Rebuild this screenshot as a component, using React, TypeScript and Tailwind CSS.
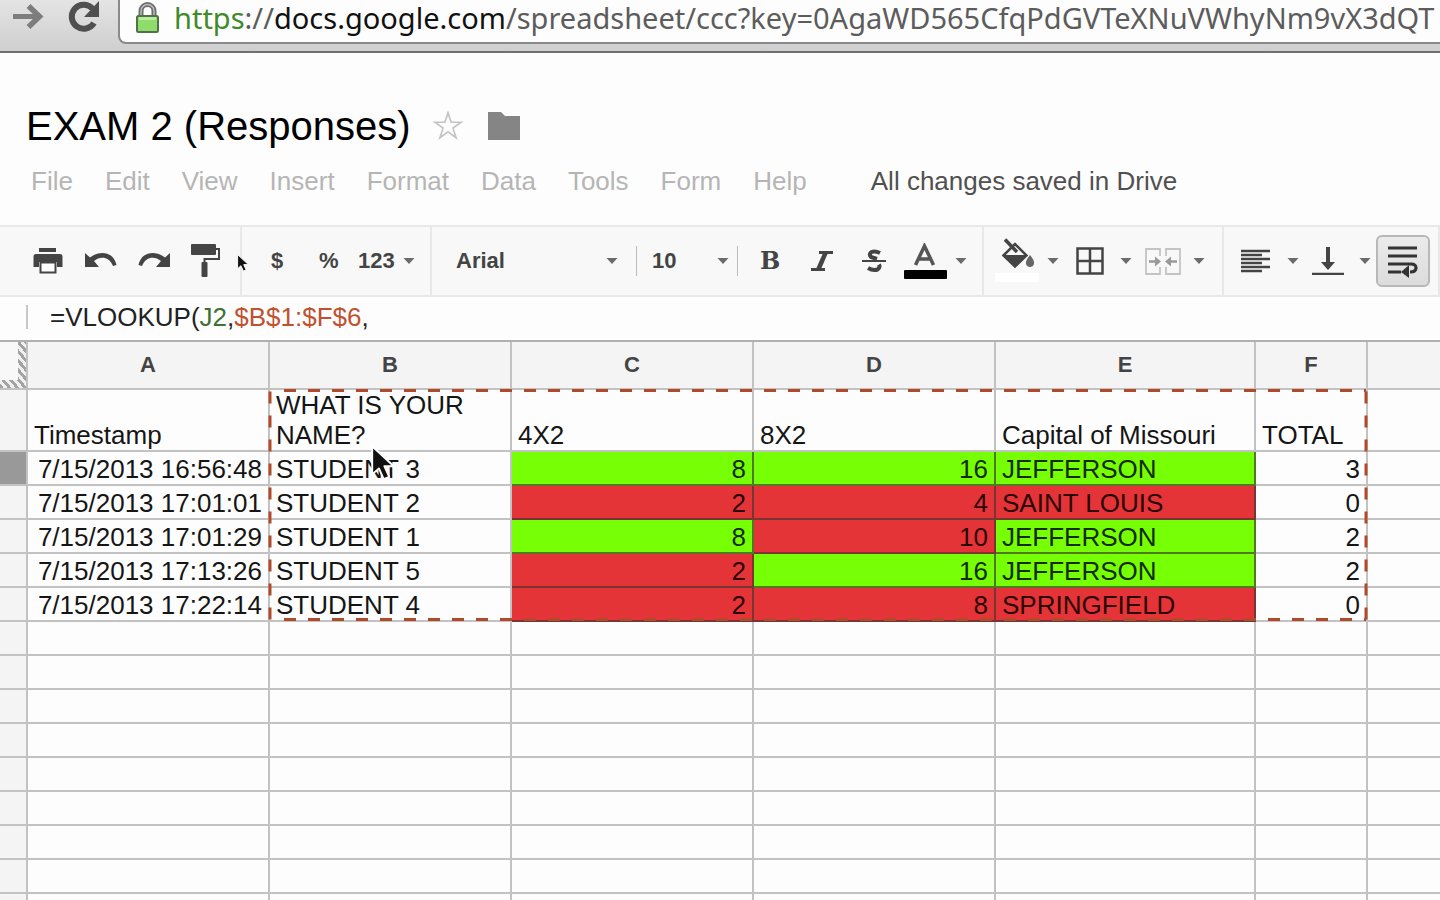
import type { ReactNode } from 'react';

type Mark = 'ok' | 'bad';

interface ResponseRow {
  time: string;
  name: string;
  c: [string, Mark];
  d: [string, Mark];
  e: [string, Mark];
  total: string;
}

const MENUS = ['File', 'Edit', 'View', 'Insert', 'Format', 'Data', 'Tools', 'Form', 'Help'];

const COLUMNS = ['A', 'B', 'C', 'D', 'E', 'F'];

const QUESTIONS = ['Timestamp', 'WHAT IS YOUR NAME?', '4X2', '8X2', 'Capital of Missouri', 'TOTAL'];

const ROWS: ResponseRow[] = [
  { time: '7/15/2013 16:56:48', name: 'STUDENT 3', c: ['8', 'ok'], d: ['16', 'ok'], e: ['JEFFERSON', 'ok'], total: '3' },
  { time: '7/15/2013 17:01:01', name: 'STUDENT 2', c: ['2', 'bad'], d: ['4', 'bad'], e: ['SAINT LOUIS', 'bad'], total: '0' },
  { time: '7/15/2013 17:01:29', name: 'STUDENT 1', c: ['8', 'ok'], d: ['10', 'bad'], e: ['JEFFERSON', 'ok'], total: '2' },
  { time: '7/15/2013 17:13:26', name: 'STUDENT 5', c: ['2', 'bad'], d: ['16', 'ok'], e: ['JEFFERSON', 'ok'], total: '2' },
  { time: '7/15/2013 17:22:14', name: 'STUDENT 4', c: ['2', 'bad'], d: ['8', 'bad'], e: ['SPRINGFIELD', 'bad'], total: '0' },
];

const EMPTY_ROWS = 9;

const markClass: Record<Mark, string> = {
  ok: 'bg-[#76ff05] border-[#4f7a22] text-[#142b00]',
  bad: 'bg-[#e53437] border-[#7a3532] text-[#2b0506]',
};

function Caret() {
  return (
    <svg className="h-2 w-3 shrink-0" viewBox="0 0 12 8" fill="#6b6b6b">
      <path d="M0.5 1h11L6 7z" />
    </svg>
  );
}

function ToolButton({ label, className, children }: { label: string; className: string; children: ReactNode }) {
  return (
    <button type="button" aria-label={label} className={`flex h-12 shrink-0 items-center ${className}`}>
      {children}
    </button>
  );
}

function Cursor({ className }: { className: string }) {
  return (
    <svg className={`pointer-events-none absolute ${className}`} viewBox="0 0 20 30">
      <path d="M1 1v23.5l5.6-5 4 9 4.6-2-4-8.8H19z" fill="#111" stroke="#fff" strokeWidth="1.6" strokeLinejoin="round" />
    </svg>
  );
}

function BrowserBar() {
  return (
    <div className="flex h-[53px] items-start border-b-2 border-[#707070] bg-linear-to-b from-[#e4e4e4] to-[#cfcfcf]">
      <button type="button" aria-label="Forward" className="ml-3 mt-0.5 shrink-0">
        <svg className="h-7 w-8" viewBox="0 0 32 28" fill="none" stroke="#7d7d7d" strokeWidth="5">
          <path d="M1 14.5h26" />
          <path d="M16.5 4l11 10.5-11 10.5" strokeWidth="5.5" />
        </svg>
      </button>
      <button type="button" aria-label="Reload" className="ml-[22px] shrink-0">
        <svg className="h-9 w-9" viewBox="0 0 36 36">
          <path d="M26.5 8.5A12 12 0 1 0 28 23" fill="none" stroke="#505050" strokeWidth="6" />
          <path d="M33 1v16H18z" fill="#505050" />
        </svg>
      </button>
      <div className="ml-4 flex h-11 min-w-0 flex-1 items-start rounded-bl-lg border-b-2 border-l-2 border-[#8a8a8a] bg-[#fdfdfd]">
        <svg className="ml-3.5 h-[34px] w-7 shrink-0" viewBox="0 0 28 34">
          <path d="M7 17v-6a6.500 6.500 0 0 1 13 0v6" fill="none" stroke="#6d6d6d" strokeWidth="5" />
          <path d="M7 17v-6a6.500 6.500 0 0 1 13 0v6" fill="none" stroke="#b9b9b9" strokeWidth="1.500" />
          <rect x="3" y="16" width="21" height="16" rx="1.500" fill="#8fdc6c" stroke="#52704a" strokeWidth="2" />
          <path d="M5 18.500h17" stroke="#b5ee9a" strokeWidth="3" />
        </svg>
        <div className="ml-3 whitespace-nowrap font-['Noto_Sans',sans-serif] text-[29px] leading-9 text-[#5c5c5c]">
          <span className="text-[#3f8a2b]">https</span>://<span className="text-[#111]">docs.google.com</span>
          /spreadsheet/ccc?key=0AgaWD565CfqPdGVTeXNuVWhyNm9vX3dQT
        </div>
      </div>
    </div>
  );
}

function DocHeader() {
  return (
    <header className="h-[172px] pt-[49px]">
      <div className="flex items-center">
        <h1 className="ml-[26px] whitespace-nowrap text-[40px] leading-[48px] text-black">EXAM 2 (Responses)</h1>
        <button type="button" aria-label="Star" className="ml-[22px]">
          <svg className="h-[30px] w-[30px]" viewBox="0 0 32 32" fill="none" stroke="#c4c4c4" strokeWidth="1.800">
            <path d="M16 2l3.300 10H30l-8.700 6.300 3.300 10.200L16 22.200l-8.600 6.300 3.300-10.200L2 12h10.700z" />
          </svg>
        </button>
        <button type="button" aria-label="Move to folder" className="ml-[25px]">
          <svg className="h-7 w-8" viewBox="0 0 32 28" fill="#858585">
            <path d="M0 0h13l4 4h15v24H0z" />
          </svg>
        </button>
      </div>
      <nav className="ml-[31px] mt-[15px] flex items-center whitespace-nowrap text-[26px] leading-8">
        <div className="flex gap-8 text-[#b5b5b5]">
          {MENUS.map((menu) => (
            <button key={menu} type="button">
              {menu}
            </button>
          ))}
        </div>
        <span className="ml-16 text-[#505050]">All changes saved in Drive</span>
      </nav>
    </header>
  );
}

function Toolbar() {
  return (
    <div className="flex h-[72px] items-stretch overflow-hidden border-y-2 border-[#e8e8e8] bg-[#f8f8f8] text-[22px] font-bold leading-7 text-[#444]">
      <div className="flex w-[242px] shrink-0 items-center border-r-2 border-[#e8e8e8] pl-[33px]">
        <ToolButton label="Print" className="w-[52px]">
          <svg className="h-[26px] w-[30px]" viewBox="0 0 30 26" fill="#444">
            <path d="M6 0h17v4H6z" />
            <path d="M3 6h24q2.500 0 2.500 2.500V19H24v-5H6v5H.5V8.500Q.5 6 3 6z" />
            <path d="M7.500 14.500h15v10h-15z" fill="#fff" stroke="#444" strokeWidth="2" />
          </svg>
        </ToolButton>
        <ToolButton label="Undo" className="w-[53px]">
          <svg className="h-5 w-8" viewBox="0 0 32 20" fill="#444">
            <path d="M0 2l5 4.500C13 0 28-1 31.500 14l-3.500 1C24 5 15 5 9 10l5 6H0z" />
          </svg>
        </ToolButton>
        <ToolButton label="Redo" className="w-[53px]">
          <svg className="h-5 w-8" viewBox="0 0 32 20" fill="#444">
            <path d="M32 2l-5 4.500C19 0 4-1 .5 14l3.500 1C8 5 17 5 23 10l-5 6h14z" />
          </svg>
        </ToolButton>
        <ToolButton label="Paint format" className="w-8">
          <svg className="h-[34px] w-[30px]" viewBox="0 0 30 34" fill="#444">
            <rect width="25" height="11" rx="1" />
            <path d="M25 5h3v10H13.500v5" fill="none" stroke="#444" strokeWidth="2" />
            <rect x="10.500" y="18" width="6" height="15" rx="1" />
          </svg>
        </ToolButton>
      </div>
      <div className="flex w-[190px] shrink-0 items-center border-r-2 border-[#e8e8e8] pl-[29px]">
        <ToolButton label="Format as currency" className="w-12">
          $
        </ToolButton>
        <ToolButton label="Format as percent" className="w-[39px]">
          %
        </ToolButton>
        <ToolButton label="More formats" className="gap-2">
          123
          <Caret />
        </ToolButton>
      </div>
      <div className="flex w-[552px] shrink-0 items-center border-r-2 border-[#e8e8e8] pl-6">
        <ToolButton label="Font" className="w-[162px] justify-between">
          Arial
          <Caret />
        </ToolButton>
        <div className="ml-[18px] h-[30px] w-px bg-[#bbb]" />
        <ToolButton label="Font size" className="ml-[15px] w-[77px] justify-between">
          10
          <Caret />
        </ToolButton>
        <div className="ml-2 h-[30px] w-px bg-[#bbb]" />
        <ToolButton label="Bold" className="ml-[22px] w-[51px]">
          <span className="font-['DejaVu_Serif',serif] text-2xl">B</span>
        </ToolButton>
        <ToolButton label="Italic" className="w-[51px]">
          <svg className="h-5 w-[22px]" viewBox="0 0 22 20" fill="none" stroke="#444">
            <path d="M8 1.500h14M0 18.500h14" strokeWidth="3" />
            <path d="M14.500 2L7.500 18" strokeWidth="4.500" />
          </svg>
        </ToolButton>
        <ToolButton label="Strikethrough" className="w-[42px]">
          <svg className="h-6 w-6" viewBox="0 0 24 24" fill="none" stroke="#444">
            <path d="M18 4Q13 1.500 9.500 3 6.500 5 9 8l6 2M6 19q5 3 9.500 1.500 3-2 1.500-5" strokeWidth="4" />
            <path d="M0 12h24" strokeWidth="2" />
          </svg>
        </ToolButton>
        <ToolButton label="Text colour" className="gap-2">
          <svg className="h-9 w-[43px]" viewBox="0 0 43 36">
            <path d="M11.500 22L20.500 3l9 19M14.500 16h12" fill="none" stroke="#555" strokeWidth="3.500" />
            <rect y="27" width="43" height="9" rx="1" fill="#000" />
          </svg>
          <Caret />
        </ToolButton>
      </div>
      <div className="flex w-[240px] shrink-0 items-center border-r-2 border-[#e8e8e8] pl-[11px]">
        <ToolButton label="Fill colour" className="w-[81px] gap-2">
          <svg className="h-[46px] w-11" viewBox="0 0 44 46">
            <rect y="35" width="44" height="9" fill="#fff" />
            <path d="M8.500 17.500L20 6l11.500 11.500L20 28.500z" fill="#f8f8f8" stroke="#444" strokeWidth="2.500" />
            <path d="M8 17h24L20 29z" fill="#444" />
            <path d="M10 1.500L22 14" stroke="#444" strokeWidth="3.500" />
            <path d="M35 17q5 6 4 9-1 3-4 3t-4-3q-1-3 4-9z" fill="#666" />
          </svg>
          <Caret />
        </ToolButton>
        <ToolButton label="Borders" className="w-[69px] gap-4">
          <svg className="h-7 w-7" viewBox="0 0 28 28" fill="none" stroke="#444" strokeWidth="2.500">
            <path d="M1.500 1.500h25v25h-25zM14 1.500v25M1.500 14h25" />
          </svg>
          <Caret />
        </ToolButton>
        <ToolButton label="Merge cells" className="gap-3">
          <svg className="h-[27px] w-9" viewBox="0 0 36 27" fill="none" stroke="#c4c4c4" strokeWidth="1.800">
            <path d="M15 8V1H1v25h14v-7M21 8V1h14v25H21v-7" />
            <path d="M4 13.500h6M32 13.500h-6" stroke="#999" strokeWidth="2.500" />
            <path d="M10 8.500l6 5-6 5zM26 8.500l-6 5 6 5z" fill="#999" stroke="none" />
          </svg>
          <Caret />
        </ToolButton>
      </div>
      <div className="flex w-[216px] shrink-0 items-center border-r-2 border-[#e8e8e8] pl-[17px]">
        <ToolButton label="Horizontal align" className="w-[71px] gap-[17px]">
          <svg className="h-6 w-[29px]" viewBox="0 0 29 24" stroke="#444" strokeWidth="2.400">
            <path d="M0 2h29M0 6h21M0 10h29M0 14h21M0 18h29M0 22h21" />
          </svg>
          <Caret />
        </ToolButton>
        <ToolButton label="Vertical align" className="w-16 gap-[15px]">
          <svg className="h-7 w-8" viewBox="0 0 32 28" fill="none" stroke="#444">
            <path d="M16 0v18" strokeWidth="4" />
            <path d="M9 15h14l-7 8z" fill="#444" stroke="none" />
            <path d="M0 27h32" strokeWidth="2.500" />
          </svg>
          <Caret />
        </ToolButton>
        <button
          type="button"
          aria-label="Wrap text"
          aria-pressed="true"
          className="flex h-[52px] w-[54px] shrink-0 items-center justify-center rounded-md border-2 border-[#b8b8b8] bg-linear-to-b from-[#ebebeb] to-[#dcdcdc]"
        >
          <svg className="h-[34px] w-[30px]" viewBox="0 0 30 34" fill="none" stroke="#333" strokeWidth="3.200">
            <path d="M0 4h29M0 12h29M0 20h23q5 0 5 4t-6 4M0 28h13" />
            <path d="M21 21v13l-8-6z" fill="#333" stroke="none" />
          </svg>
        </button>
      </div>
      <Cursor className="left-[237px] top-[254px] h-[18px] w-3" />
    </div>
  );
}

function FormulaBar() {
  return (
    <div className="flex h-[43px] items-center bg-[#fdfdfd] pb-1">
      <div className="ml-[26px] h-6 w-0.5 bg-[#c8c8c8]" />
      <code className="ml-[22px] whitespace-nowrap font-['Liberation_Sans',Arial,sans-serif] text-[26px] leading-8 text-[#222]">
        =VLOOKUP(<span className="text-[#3f7032]">J2</span>,<span className="text-[#c0512f]">$B$1:$F$6</span>,
      </code>
    </div>
  );
}

function RangeOutline() {
  return (
    <svg
      className="pointer-events-none absolute left-[268px] top-12 h-[234px] w-[1100px]"
      viewBox="0 0 1100 234"
      fill="none"
      stroke="#b14a2b"
      strokeWidth="3"
      strokeDasharray="12 12"
    >
      <path d="M16 2.500H1098M16 231.500H1098" />
      <path d="M2 3.500V233M1098 3.500V233" />
    </svg>
  );
}

const cell = 'h-[34px] overflow-hidden whitespace-nowrap border-b-2 border-r-2 px-1.5 py-0 align-bottom';
const plain = 'border-[#c2c2c2]';
const rowHead = 'h-[34px] border-b-2 border-r-2 border-[#c2c2c2] p-0';

function Sheet() {
  return (
    <div className="relative">
      <table className="w-full table-fixed border-separate border-spacing-0 border-t-2 border-[#b0b0b0] text-[26px] leading-[30px] text-[#151515]">
        <colgroup>
          <col className="w-7" />
          <col className="w-[242px]" />
          <col className="w-[242px]" />
          <col className="w-[242px]" />
          <col className="w-[242px]" />
          <col className="w-[260px]" />
          <col className="w-[112px]" />
          <col />
        </colgroup>
        <thead>
          <tr className="bg-[#f4f4f4] text-[22px] text-[#444]">
            <td className="h-12 border-b-2 border-r-2 border-[#c2c2c2] bg-[repeating-linear-gradient(50deg,#a3a3a3_0_3px,#f0f0f0_3px_6px)] p-0 align-top">
              <div className="h-[38px] w-[18px] bg-[#f8f8f8]" />
            </td>
            {COLUMNS.map((name) => (
              <th key={name} scope="col" className="h-12 border-b-2 border-r-2 border-[#c2c2c2] p-0 align-middle font-bold">
                {name}
              </th>
            ))}
            <td className="border-b-2 border-[#c2c2c2]" />
          </tr>
        </thead>
        <tbody>
          <tr>
            <td className={`${rowHead} bg-[#f4f4f4]`} />
            {QUESTIONS.map((question) => (
              <td key={question} className={`h-[62px] border-b-2 border-r-2 px-1.5 py-0 align-bottom ${plain}`}>
                {question}
              </td>
            ))}
            <td className={`border-b-2 ${plain}`} />
          </tr>
          {ROWS.map((row, i) => (
            <tr key={row.time}>
              <td className={`${rowHead} ${i === 0 ? 'bg-[#999]' : 'bg-[#f4f4f4]'}`} />
              <td className={`${cell} ${plain} text-right`}>{row.time}</td>
              <td className={`${cell} ${plain}`}>{row.name}</td>
              <td className={`${cell} ${markClass[row.c[1]]} text-right`}>{row.c[0]}</td>
              <td className={`${cell} ${markClass[row.d[1]]} text-right`}>{row.d[0]}</td>
              <td className={`${cell} ${markClass[row.e[1]]}`}>{row.e[0]}</td>
              <td className={`${cell} ${plain} text-right`}>{row.total}</td>
              <td className={`border-b-2 ${plain}`} />
            </tr>
          ))}
          {Array.from({ length: EMPTY_ROWS }, (_, i) => (
            <tr key={i}>
              <td className={`${rowHead} bg-[#f4f4f4]`} />
              {COLUMNS.map((name) => (
                <td key={name} className={`${cell} ${plain}`} />
              ))}
              <td className={`border-b-2 ${plain}`} />
            </tr>
          ))}
        </tbody>
      </table>
      <RangeOutline />
      <Cursor className="left-[371px] top-[105px] h-9 w-6" />
    </div>
  );
}

export default function App() {
  return (
    <main className="h-screen overflow-hidden bg-[#fdfdfd] font-['Liberation_Sans',Arial,sans-serif]">
      <BrowserBar />
      <DocHeader />
      <Toolbar />
      <FormulaBar />
      <Sheet />
    </main>
  );
}
